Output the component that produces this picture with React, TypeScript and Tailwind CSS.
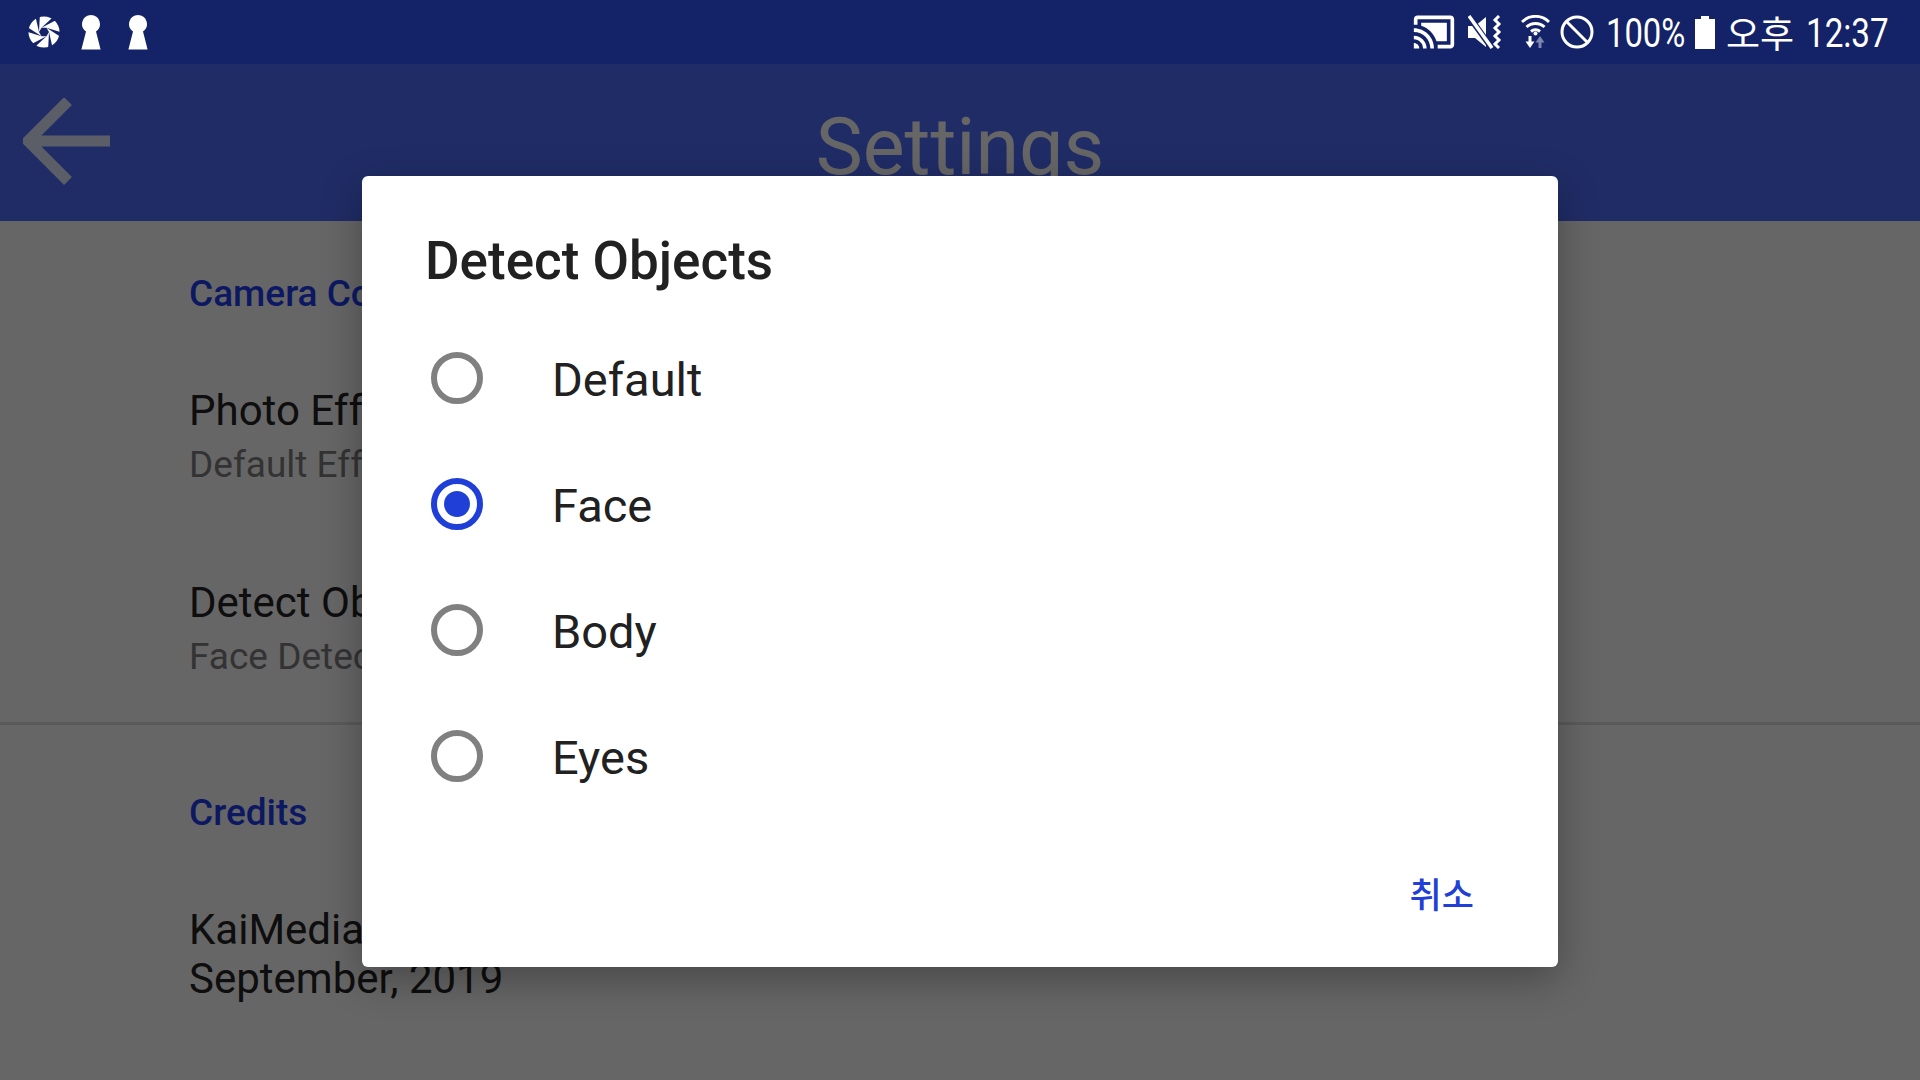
import React from 'react';

const roboto = 'font-["Roboto",sans-serif]';

const options = [
  { label: 'Default', checked: false },
  { label: 'Face', checked: true },
  { label: 'Body', checked: false },
  { label: 'Eyes', checked: false },
];

const Aperture = () => (
  <svg width="34" height="34" viewBox="0 0 34 34" className="shrink-0">
    <circle cx="17" cy="17" r="15.5" fill="#fff" />
    {[0, 60, 120, 180, 240, 300].map((angle) => (
      <polygon
        key={angle}
        points="22,17 25.2,31 21.2,32.600"
        fill="#142268"
        transform={`rotate(${angle} 17 17)`}
      />
    ))}
    <polygon points="14.5,12.7 19.5,12.7 22,17 19.5,21.3 14.5,21.3 12,17" fill="#142268" />
  </svg>
);

const Keyhole = () => (
  <svg width="20" height="35" viewBox="0 0 20 35" className="shrink-0">
    <path d="M10 0a9 9 0 0 1 5 16.4L19.6 34.500H0.400L5 16.4A9 9 0 0 1 10 0z" fill="#fff" />
  </svg>
);

const CastIcon = () => (
  <svg width="44" height="44" viewBox="0 0 24 24" fill="#fff" className="shrink-0">
    <path d="M1 18v3h3c0-1.66-1.34-3-3-3zm0-4v2c2.76 0 5 2.24 5 5h2c0-3.87-3.13-7-7-7zm18-7H5v1.63c3.96 1.28 7.09 4.41 8.37 8.37H19V7zM1 10v2c4.97 0 9 4.03 9 9h2c0-6.08-4.93-11-11-11zm20-7H3c-1.1 0-2 .9-2 2v3h2V5h18v14h-7v2h7c1.1 0 2-.9 2-2V5c0-1.1-.9-2-2-2z" />
  </svg>
);

const MuteVibrate = () => (
  <svg width="34" height="34" viewBox="0 0 34 34" className="shrink-0">
    <path d="M0 11h7L18 2v30L7 23H0z" fill="#fff" />
    <path d="M0 0L23 32" stroke="#142268" strokeWidth="6" />
    <path d="M1 1L24 33" stroke="#fff" strokeWidth="3.500" />
    <path d="M31 1l-4 4 4 4-4 4 4 4-4 4 4 4-4 4 4 4" stroke="#fff" strokeWidth="3" fill="none" />
  </svg>
);

const WifiIcon = () => (
  <svg width="29" height="34" viewBox="0 0 29 34" className="shrink-0">
    <g stroke="#fff" strokeWidth="3" fill="none">
      <path d="M1 7a19 19 0 0 1 27 0" />
      <path d="M5.500 12a13 13 0 0 1 18 0" />
      <path d="M10 16.500a7 7 0 0 1 9 0" />
    </g>
    <circle cx="14.500" cy="18.500" r="2" fill="#fff" />
    <path d="M9 21v7" stroke="#fff" strokeWidth="3" />
    <path d="M4.500 26.500h9L9 33z" fill="#fff" />
    <path d="M19 33v-7" stroke="#7f87b0" strokeWidth="3" />
    <path d="M14.500 27.500h9L19 21z" fill="#7f87b0" />
  </svg>
);

const BlockIcon = () => (
  <svg width="34" height="34" viewBox="0 0 34 34" className="shrink-0">
    <circle cx="17" cy="17" r="15" stroke="#fff" strokeWidth="3" fill="none" />
    <path d="M6.500 6.500l21 21" stroke="#fff" strokeWidth="3" />
  </svg>
);

const BatteryIcon = () => (
  <svg width="20" height="33" viewBox="0 0 20 33" className="shrink-0">
    <path d="M6 0h8v3h6v30H0V3h6z" fill="#fff" />
  </svg>
);

export default function App() {
  return (
    <div className={`flex h-screen w-full flex-col overflow-hidden bg-[#142268] ${roboto}`}>
      {/* Status bar */}
      <div className="flex h-16 shrink-0 items-center justify-between bg-[#142268] pl-[27px] pr-[30px] text-white">
        <div className="flex items-center">
          <Aperture />
          <div className="ml-[20px]"><Keyhole /></div>
          <div className="ml-[27px]"><Keyhole /></div>
        </div>
        <div className="flex items-center">
          <CastIcon />
          <div className="ml-[12px]"><MuteVibrate /></div>
          <div className="ml-[19px]"><WifiIcon /></div>
          <div className="ml-[10px]"><BlockIcon /></div>
          {/* the device's clock font is narrower than Roboto, so squeeze it */}
          <div className="ml-[12px] mt-[3px] w-[82px] whitespace-nowrap text-[40px] leading-[64px]">
            <span className="inline-block origin-left scale-x-[0.82]">100%</span>
          </div>
          <div className="ml-[7px]"><BatteryIcon /></div>
          <span className='ml-[11px] font-["Noto_Sans_CJK_KR",sans-serif] text-[37px] leading-[64px]'>오후</span>
          <div className="ml-[12px] mt-[3px] w-[84px] whitespace-nowrap text-[40px] leading-[64px]">
            <span className="inline-block origin-left scale-x-[0.83]">12:37</span>
          </div>
        </div>
      </div>

      <div className="relative flex-1 overflow-hidden bg-white">
        {/* App bar */}
        <div className="relative flex h-[157px] items-center justify-center bg-[#526eff]">
          <svg width="92" height="90" viewBox="0 0 92 90" className="absolute left-[23px] top-[34px]" fill="none">
            <path d="M45 3L5 43l40 40M5 43h82" stroke="#e3ebff" strokeWidth="11" />
          </svg>
          <span className="mt-[8px] text-[79px] leading-[84px] text-white">Settings</span>
        </div>

        {/* Preference list */}
        <div className="pl-[189px]">
          <div className="pt-[51px] text-[37px] font-medium leading-[44px] text-[#1f40f5]">Camera Configuration</div>
          <div className="mt-[71px] text-[42px] leading-[48px] text-[#232323]">Photo Effect</div>
          <div className="mt-[6px] text-[37px] leading-[48px] text-[#808080]">Default Effect</div>
          <div className="mt-[90px] text-[42px] leading-[48px] text-[#232323]">Detect Objects</div>
          <div className="mt-[6px] text-[37px] leading-[48px] text-[#808080]">Face Detection</div>
        </div>
        <div className="mt-[41px] h-[3px] bg-[#e0e0e0]" />
        <div className="pl-[189px]">
          <div className="mt-[66px] text-[37px] font-medium leading-[44px] text-[#1f40f5]">Credits</div>
          <div className="mt-[70px] text-[42px] leading-[49px] text-[#232323]">
            KaiMedia
            <br />
            September, 2019
          </div>
        </div>

        {/* Scrim and dialog */}
        <div className="absolute inset-0 flex justify-center bg-black/60 pt-[112px]">
          <div className="flex h-[791px] w-[1196px] flex-col rounded-[6px] bg-white shadow-[0_12px_40px_rgba(0,0,0,0.3)]">
            <div className="pl-[63px] pt-[55px] text-[53px] font-medium leading-[60px] text-[#212121]">Detect Objects</div>
            <div className="mt-[24px] flex flex-col pl-[69px]">
              {options.map((option) => (
                <div key={option.label} className="flex h-[126px] items-center">
                  <div
                    className={`flex h-[52px] w-[52px] shrink-0 items-center justify-center rounded-full border-[6px] ${
                      option.checked ? 'border-[#1f3fd6]' : 'border-[#808080]'
                    }`}
                  >
                    {option.checked && <div className="h-[26px] w-[26px] rounded-full bg-[#1f3fd6]" />}
                  </div>
                  <span className="ml-[69px] mt-[4px] text-[47px] leading-[56px] text-[#212121]">{option.label}</span>
                </div>
              ))}
            </div>
            <div className="mt-[52px] flex justify-end pr-[84px]">
              <span className='font-["Noto_Sans_CJK_KR",sans-serif] text-[35px] font-medium leading-[44px] text-[#1f3fd6]'>취소</span>
            </div>
          </div>
        </div>
      </div>
    </div>
  );
}
